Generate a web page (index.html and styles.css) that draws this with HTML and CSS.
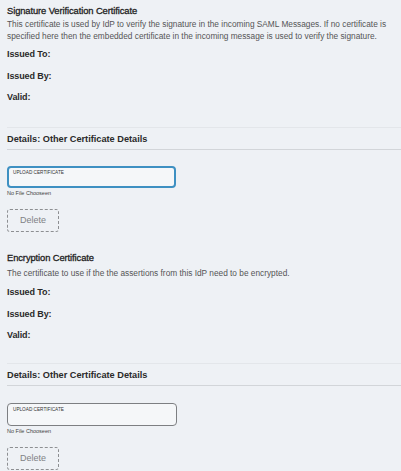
FILE: index.html
```html
<!DOCTYPE html>
<html>
<head>
<meta charset="utf-8">
<link rel="stylesheet" href="styles.css">
</head>
<body>
<section class="cert">
  <h3 class="cert-title">Signature Verification Certificate</h3>
  <p class="cert-desc">This certificate is used by IdP to verify the signature in the incoming SAML Messages. If no certificate is specified here then the embedded certificate in the incoming message is used to verify the signature.</p>
  <div class="fields">
    <div class="field">Issued To:</div>
    <div class="field">Issued By:</div>
    <div class="field">Valid:</div>
  </div>
  <div class="details">Details: Other Certificate Details</div>
  <div class="upload focused">UPLOAD CERTIFICATE</div>
  <div class="file-note">No File Chooseen</div>
  <button class="delete">Delete</button>
</section>
<section class="cert second">
  <h3 class="cert-title">Encryption Certificate</h3>
  <p class="cert-desc">The certificate to use if the the assertions from this IdP need to be encrypted.</p>
  <div class="fields">
    <div class="field">Issued To:</div>
    <div class="field">Issued By:</div>
    <div class="field">Valid:</div>
  </div>
  <div class="details">Details: Other Certificate Details</div>
  <div class="upload">UPLOAD CERTIFICATE</div>
  <div class="file-note">No File Chooseen</div>
  <button class="delete">Delete</button>
</section>
</body>
</html>
```
FILE: styles.css
```css
html, body {
  margin: 0;
  padding: 0;
  background: #eef1f5;
}
body {
  font-family: "Liberation Sans", Arial, sans-serif;
  color: #222;
  padding-left: 7px;
  width: 394px;
  height: 471px;
  overflow: hidden;
}
.cert {
  padding-top: 4px;
}
.cert.second {
  padding-top: 19px;
}
.cert-title {
  margin: 0;
  font-size: 9.4px;
  line-height: 14px;
  font-weight: normal;
  letter-spacing: -0.1px;
  color: #1e1e1e;
  -webkit-text-stroke: 0.3px #1e1e1e;
}
.cert-desc {
  margin: 1px 0 0 0;
  font-size: 8.3px;
  line-height: 11.5px;
  color: #555;
  width: 381px;
}
.second .cert-desc {
  margin-top: 3px;
  margin-bottom: 3px;
}
.fields {
  margin-top: 2px;
}
.field {
  font-size: 9px;
  line-height: 21.5px;
  font-weight: bold;
  letter-spacing: -0.1px;
  color: #2a2a2a;
}
.details {
  margin-top: 18px;
  height: 17px;
  padding-top: 4px;
  border-top: 1px solid #e3e6ea;
  border-bottom: 1px solid #d2d5d9;
  font-size: 9.2px;
  line-height: 14px;
  font-weight: bold;
  color: #2a2a2a;
}
.second .details {
  margin-top: 16px;
}
.upload {
  margin-top: 16px;
  height: 17px;
  border: 2px solid #3e90c2;
  border-radius: 4px;
  background: #f5f7f9;
  font-size: 4.7px;
  line-height: 7px;
  padding-top: 1px;
  padding-left: 4px;
  box-sizing: content-box;
  width: 161px;
  color: #333;
}
.second .upload {
  margin-top: 17px;
}
.upload:not(.focused) {
  border: 1px solid #7d7f82;
  height: 19px;
  width: 163px;
  padding-left: 5px;
  padding-top: 2px;
}
.file-note {
  font-size: 5.5px;
  line-height: 8px;
  color: #444;
  margin-top: 1px;
}
.delete {
  display: block;
  margin-top: 12px;
  width: 52px;
  height: 23px;
  border: 1px dashed #8d8f92;
  border-radius: 3px;
  background: transparent;
  font-family: "Liberation Sans", Arial, sans-serif;
  font-size: 9px;
  color: #808285;
  padding: 0;
}
```
